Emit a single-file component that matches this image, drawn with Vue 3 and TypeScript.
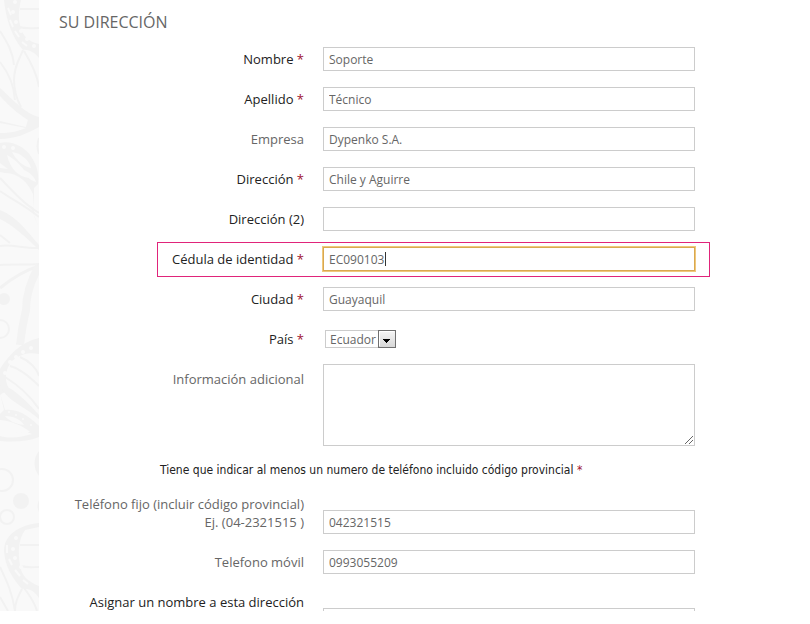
<script setup lang="ts">
import { reactive } from 'vue'

interface Field {
  id: string
  label: string
  required?: boolean
  muted?: boolean
}

const form = reactive<Record<string, string>>({
  nombre: 'Soporte',
  apellido: 'Técnico',
  empresa: 'Dypenko S.A.',
  direccion: 'Chile y Aguirre',
  direccion2: '',
  cedula: 'EC090103',
  ciudad: 'Guayaquil',
  pais: 'Ecuador',
  info: '',
  fijo: '042321515',
  movil: '0993055209',
  alias: '',
})

const fields: Field[] = [
  { id: 'nombre', label: 'Nombre', required: true },
  { id: 'apellido', label: 'Apellido', required: true },
  { id: 'empresa', label: 'Empresa', muted: true },
  { id: 'direccion', label: 'Dirección', required: true },
  { id: 'direccion2', label: 'Dirección (2)' },
  { id: 'cedula', label: 'Cédula de identidad', required: true },
  { id: 'ciudad', label: 'Ciudad', required: true },
]
</script>

<template>
  <div class="page">
    <div class="backdrop">
      <svg width="39" height="611" viewBox="0 0 39 611" fill="none" stroke="#f2f2f2" aria-hidden="true">
        <!-- upper wing -->
        <path d="M4 0C6 20 12 37 23 50C29 49 35 53 39 58V44C29 42 22 36 20 25C18 17 19 8 21 0Z" fill="#f2f2f2" stroke="none" />
        <path d="M20 9H39M19 27C26 29 32 28 39 28" stroke-width="2" />
        <g fill="#f9f9f9" stroke="none">
          <circle cx="15" cy="2" r="2" /><circle cx="13" cy="12" r="2" /><circle cx="16" cy="22" r="2" />
          <circle cx="21" cy="31" r="2" /><circle cx="27" cy="39" r="2" /><circle cx="34" cy="46" r="2" />
        </g>
        <path d="M8 8L11 15M10 20L13 27M15 31L19 37M22 42L27 46" stroke="#f9f9f9" stroke-width="2" />
        <path d="M0 31C7 42 13 52 14 65M23 50C19 60 14 67 14 80C14 91 16 98 21 107" stroke-width="2" />
        <path d="M24 51C32 64 37 74 39 87M0 62C8 72 14 85 15 100" stroke-width="2" />
        <path d="M0 88C13 100 26 114 39 117V127C27 134 14 139 0 139V133C10 133 19 131 26 128L0 123V121L26 127L28 120C18 114 7 104 0 96Z" fill="#f2f2f2" stroke="none" />
        <!-- second wing -->
        <path d="M0 143C13 140 26 148 32 158C37 166 39 173 38 184L34 188V216L39 228L30 205C24 189 14 174 0 172Z" fill="#f2f2f2" stroke="none" />
        <g fill="#f9f9f9" stroke="none">
          <circle cx="4" cy="147" r="2" /><circle cx="13" cy="148" r="2" />
          <path d="M12 152C21 153 29 160 31 168C24 167 16 160 12 152Z" />
          <path d="M7 155C16 160 24 168 29 178C19 177 10 169 7 155Z" />
          <path d="M24 170C31 173 35 178 36 182C30 180 25 176 24 170Z" />
          <path d="M0 163L8 169L0 168ZM4 173C17 172 28 182 33 194L34 208C23 202 10 190 4 173Z" />
        </g>
        <path d="M39 138C37 144 37 149 39 154" stroke-width="2" />
        <path d="M0 191C13 200 27 207 39 217M0 178C12 190 23 204 39 213" stroke-width="2" />
        <path d="M0 210C18 217 30 235 39 245V250C27 238 14 226 0 219Z" fill="#f2f2f2" stroke="none" />
        <path d="M0 246C12 244 25 249 39 248M0 265C13 264 26 265 39 264M0 235L10 243" stroke-width="2" />
        <path d="M0 288C10 280 23 271 39 266" stroke-width="3" />
        <path d="M39 266C31 280 26 294 26 310C23 322 21 335 20 345" stroke-width="8" stroke="#f3f3f3" />
        <circle cx="4" cy="299" r="6" fill="#f2f2f2" stroke="none" />
        <circle cx="0" cy="329" r="9" stroke-width="2" />
        <!-- third wing -->
        <path d="M39 338C22 342 10 353 0 369V395L9 389C4 380 5 369 12 361C20 354 29 352 39 354Z" fill="#f2f2f2" stroke="none" />
        <g fill="#f9f9f9" stroke="none">
          <circle cx="5" cy="373" r="2" /><circle cx="10" cy="362" r="2" /><circle cx="16" cy="357" r="2" />
          <circle cx="23" cy="352" r="2" /><circle cx="31" cy="348" r="2" />
        </g>
        <path d="M5 377C18 385 29 394 39 409M10 366C18 368 29 376 39 386M20 357C30 361 37 369 39 376" stroke-width="2" />
        <path d="M0 384C11 387 22 396 39 415V419C27 408 12 403 3 391Z" fill="#f2f2f2" stroke="none" />
        <path d="M0 393L5 410C19 408 31 418 39 426V437C27 442 13 442 0 441V436C11 439 22 437 32 434L0 421V414L4 410Z" fill="#f2f2f2" stroke="none" />
        <g fill="#f9f9f9" stroke="none">
          <path d="M0 420C12 421 23 426 30 432C18 434 8 432 0 428Z" />
          <path d="M5 416C14 416 21 420 24 425C15 424 8 420 5 416Z" />
          <circle cx="9" cy="412" r="1" /><circle cx="16" cy="415" r="1" /><circle cx="23" cy="419" r="1" /><circle cx="31" cy="425" r="1" />
        </g>
        <path d="M39 451C33 458 33 468 39 476Z" fill="#f2f2f2" stroke="none" />
        <circle cx="2" cy="480" r="11" stroke-width="2" />
        <circle cx="21" cy="501" r="8" fill="#f2f2f2" stroke="none" />
        <circle cx="7" cy="517" r="7" stroke-width="2" />
        <path d="M39 500C37 504 37 508 39 512Z" fill="#f2f2f2" stroke="none" />
        <!-- lower wing -->
        <path d="M39 523C20 525 4 534 4 551C5 566 12 578 22 589C30 588 35 592 39 598V586C29 582 21 576 20 565C18 553 18 540 25 530L39 527Z" fill="#f2f2f2" stroke="none" />
        <path d="M20 545H39M21 566C27 568 33 567 39 567" stroke-width="2" />
        <g fill="#f9f9f9" stroke="none">
          <circle cx="16" cy="538" r="2" /><circle cx="13" cy="549" r="2" /><circle cx="15" cy="558" r="2" />
          <circle cx="21" cy="567" r="2" /><circle cx="28" cy="575" r="2" /><circle cx="36" cy="582" r="2" />
        </g>
        <path d="M7 545V553M9 559L12 565M15 570L20 576M23 580L28 584" stroke="#f9f9f9" stroke-width="2" />
        <path d="M0 567C6 580 12 591 15 611M22 589C18 597 15 602 15 611M24 588C31 597 35 604 37 611M0 597L8 611" stroke-width="2" />
      </svg>
    </div>

    <form class="address" @submit.prevent>
      <h1>SU DIRECCIÓN</h1>

      <div v-for="f in fields" :key="f.id" class="row" :class="{ marked: f.id === 'cedula' }">
        <label :for="f.id" :class="{ muted: f.muted }">{{ f.label }}<sup v-if="f.required"> *</sup></label>
        <div class="control">
          <input :id="f.id" v-model="form[f.id]" type="text" :class="{ active: f.id === 'cedula' }" />
          <span v-if="f.id === 'cedula'" class="caret"></span>
        </div>
      </div>

      <div class="row">
        <label for="pais">País<sup> *</sup></label>
        <div class="control">
          <div class="picker">
            <select id="pais" v-model="form.pais">
              <option>Ecuador</option>
            </select>
            <svg width="18" height="18" viewBox="0 0 18 18" aria-hidden="true">
              <defs>
                <linearGradient id="face" x1="0" y1="0" x2="0" y2="1">
                  <stop offset="0" stop-color="#f6f6f6" />
                  <stop offset="1" stop-color="#d6d6d6" />
                </linearGradient>
              </defs>
              <rect x="0.5" y="0.5" width="17" height="17" fill="url(#face)" stroke="#707070" />
              <path d="M1.500 16V1.500H16" fill="none" stroke="#fff" />
              <path d="M5 9H12V10H11V11H10V12H9V13H8V12H7V11H6V10H5Z" fill="#000" />
            </svg>
          </div>
        </div>
      </div>

      <div class="row tall">
        <label for="info" class="muted">Información adicional</label>
        <div class="control">
          <textarea id="info" v-model="form.info"></textarea>
          <svg class="grip" width="8" height="8" viewBox="0 0 8 8" stroke="#666" aria-hidden="true">
            <path d="M0 8L8 0M4 8L8 4" />
          </svg>
        </div>
      </div>

      <p class="note">Tiene que indicar al menos un numero de teléfono incluido código provincial <sup>*</sup></p>

      <div class="row low">
        <label for="fijo" class="muted">Teléfono fijo (incluir código provincial)<br />Ej. (04-2321515 )</label>
        <div class="control"><input id="fijo" v-model="form.fijo" type="text" /></div>
      </div>
      <div class="row">
        <label for="movil" class="muted">Telefono móvil</label>
        <div class="control"><input id="movil" v-model="form.movil" type="text" /></div>
      </div>
      <div class="row low last">
        <label for="alias">Asignar un nombre a esta dirección</label>
        <div class="control"><input id="alias" v-model="form.alias" type="text" /></div>
      </div>
    </form>
  </div>
</template>

<style>
body {
  margin: 0;
  background: #fff;
}
</style>

<style scoped>
.page {
  display: flex;
  height: calc(100vh - 13px);
  overflow: hidden;
  font-family: "Open Sans", "Noto Sans", sans-serif;
  font-size: 13px;
  line-height: 18px;
  color: #222;
}
.backdrop {
  flex: 0 0 39px;
  background: #f9f9f9;
}
.backdrop svg {
  display: block;
}
.address {
  flex: 1;
  min-width: 0;
  padding: 12px 115px 0 20px;
}
h1 {
  margin: 0 0 15px;
  font-size: 16px;
  line-height: 20px;
  font-weight: 400;
  color: #666;
}
.row {
  display: flex;
  align-items: center;
  gap: 19px;
  min-height: 24px;
  margin-bottom: 16px;
}
.row label {
  flex: 0 0 245px;
  text-align: right;
  white-space: nowrap;
}
.row .muted {
  color: #666;
}
sup {
  font-size: inherit;
  line-height: 0;
  vertical-align: baseline;
  color: #a01030;
  white-space: pre;
}
.control {
  position: relative;
  flex: 1;
  min-width: 0;
}
input,
textarea {
  display: block;
  box-sizing: border-box;
  width: 100%;
  height: 24px;
  margin: 0;
  padding: 0 5px;
  border: 1px solid #ccc;
  border-radius: 0;
  outline: 0;
  background: #fff;
  color: #666;
  font-family: inherit;
  font-size: 12px;
}
textarea {
  height: 82px;
  resize: none;
}
.marked {
  margin: -5px -15px 10px 98px;
  padding: 4px 14px 5px 0;
  border: 1px solid #e0247a;
}
.marked label {
  flex-basis: 146px;
}
.active {
  border-color: #d9a850;
  box-shadow: 0 0 0 1px #f0c87c;
}
.caret {
  position: absolute;
  top: 5px;
  left: 62px;
  width: 1px;
  height: 14px;
  background: #333;
}
.picker {
  position: relative;
  width: 71px;
  margin-left: 2px;
}
.picker select {
  display: block;
  box-sizing: border-box;
  width: 100%;
  height: 18px;
  padding: 0 0 0 4px;
  appearance: none;
  border: 1px solid #ccc;
  border-radius: 0;
  background: #fff;
  color: #666;
  font-family: inherit;
  font-size: 12px;
}
.picker svg {
  position: absolute;
  top: 0;
  right: 0;
  pointer-events: none;
}
.tall {
  align-items: flex-start;
  margin-top: -3px;
  margin-bottom: 15px;
}
.tall label {
  padding-top: 6px;
}
.grip {
  position: absolute;
  right: 2px;
  bottom: 2px;
  pointer-events: none;
}
.note {
  margin: 0 0 16px 101px;
  font-family: "DejaVu Sans Condensed", "Open Sans", sans-serif;
  font-size: 12px;
}
.low {
  align-items: flex-start;
}
.low .control {
  padding-top: 15px;
}
.last {
  margin-top: 19px;
}
</style>
